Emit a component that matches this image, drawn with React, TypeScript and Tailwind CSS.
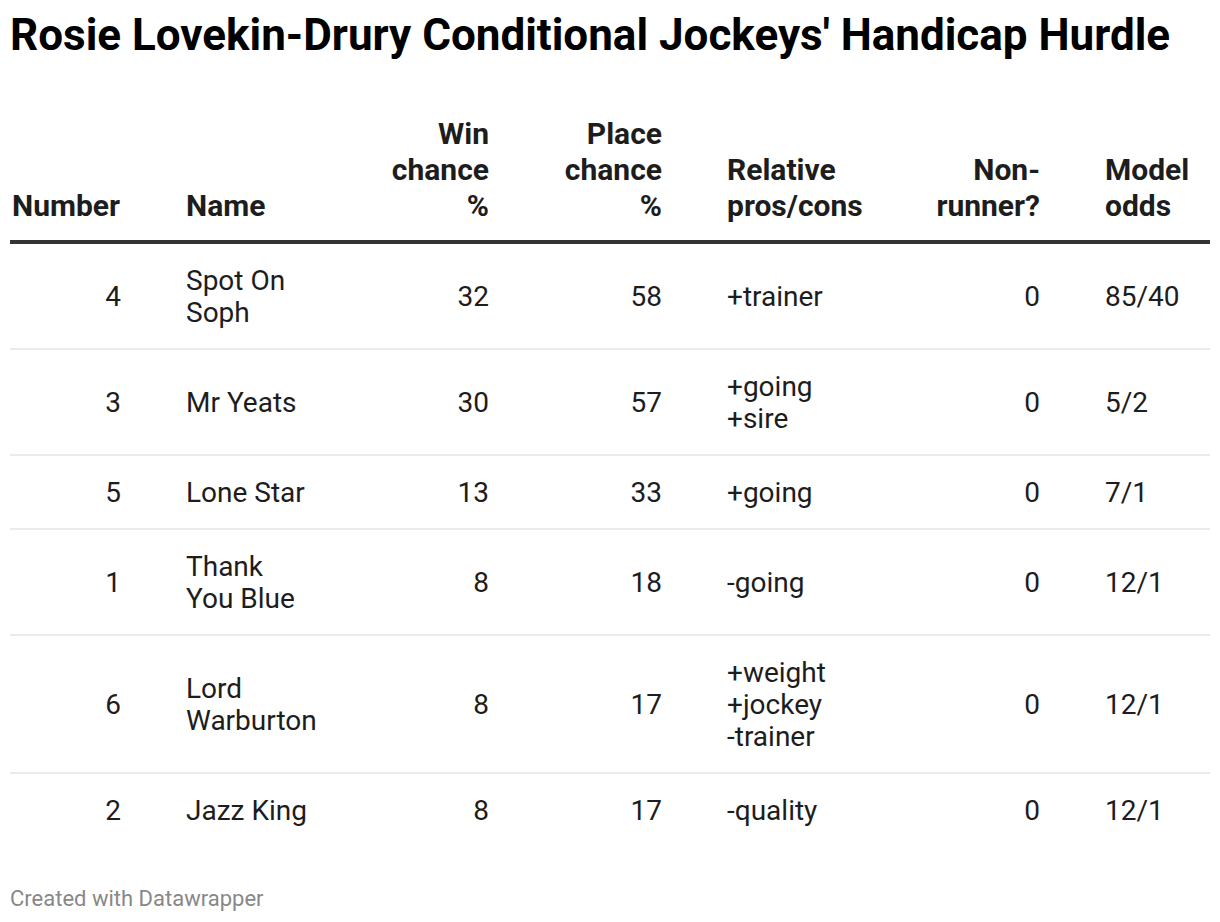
import React from "react";

type Row = {
  num: string;
  name: string[];
  win: string;
  place: string;
  pros: string[];
  nr: string;
  odds: string;
};

const rows: Row[] = [
  { num: "4", name: ["Spot On", "Soph"], win: "32", place: "58", pros: ["+trainer"], nr: "0", odds: "85/40" },
  { num: "3", name: ["Mr Yeats"], win: "30", place: "57", pros: ["+going", "+sire"], nr: "0", odds: "5/2" },
  { num: "5", name: ["Lone Star"], win: "13", place: "33", pros: ["+going"], nr: "0", odds: "7/1" },
  { num: "1", name: ["Thank", "You Blue"], win: "8", place: "18", pros: ["-going"], nr: "0", odds: "12/1" },
  { num: "6", name: ["Lord", "Warburton"], win: "8", place: "17", pros: ["+weight", "+jockey", "-trainer"], nr: "0", odds: "12/1" },
  { num: "2", name: ["Jazz King"], win: "8", place: "17", pros: ["-quality"], nr: "0", odds: "12/1" },
];

const cols =
  "grid grid-cols-[111px_134px_104px_108px_133px_115px_105px] gap-x-[65px]";

function Lines({ lines }: { lines: string[] }) {
  return (
    <>
      {lines.map((l, i) => (
        <div key={i} className="whitespace-nowrap">
          {l}
        </div>
      ))}
    </>
  );
}

export default function App() {
  return (
    <div
      className="bg-white w-[1220px] h-[922px] px-[10px] text-[#1d1d1d]"
      style={{ fontFamily: "Roboto, 'Noto Sans', sans-serif" }}
    >
      <h1 className="pt-[9px] text-[44px] leading-[52px] font-bold text-black whitespace-nowrap">
        Rosie Lovekin-Drury Conditional Jockeys' Handicap Hurdle
      </h1>

      <div className="mt-[55px]">
        <div
          className={`${cols} items-end text-[30px] leading-[36px] font-bold text-[#1d1d1d] pb-[16px] border-b-[4px] border-[#333333]`}
        >
          <div className="pl-[2px] whitespace-nowrap">Number</div>
          <div>Name</div>
          <div className="text-right">
            <div>Win</div>
            <div>chance</div>
            <div>%</div>
          </div>
          <div className="text-right">
            <div>Place</div>
            <div>chance</div>
            <div>%</div>
          </div>
          <div className="whitespace-nowrap">
            <div>Relative</div>
            <div>pros/cons</div>
          </div>
          <div className="text-right whitespace-nowrap">
            <div>Non-</div>
            <div>runner?</div>
          </div>
          <div>
            <div>Model</div>
            <div>odds</div>
          </div>
        </div>

        {rows.map((r, i) => (
          <div
            key={i}
            className={`${cols} items-center text-[28px] leading-[32px] text-[#1d1d1d] pt-[21px] pb-[19px] ${
              i < rows.length - 1 ? "border-b-[2px] border-[#ebebeb]" : "border-b-[2px] border-transparent"
            }`}
          >
            <div className="text-right">{r.num}</div>
            <div>
              <Lines lines={r.name} />
            </div>
            <div className="text-right">{r.win}</div>
            <div className="text-right">{r.place}</div>
            <div>
              <Lines lines={r.pros} />
            </div>
            <div className="text-right">{r.nr}</div>
            <div>{r.odds}</div>
          </div>
        ))}
      </div>

      <div className="mt-[39px] text-[22px] leading-[24px] text-[#888888]">Created with Datawrapper</div>
    </div>
  );
}
